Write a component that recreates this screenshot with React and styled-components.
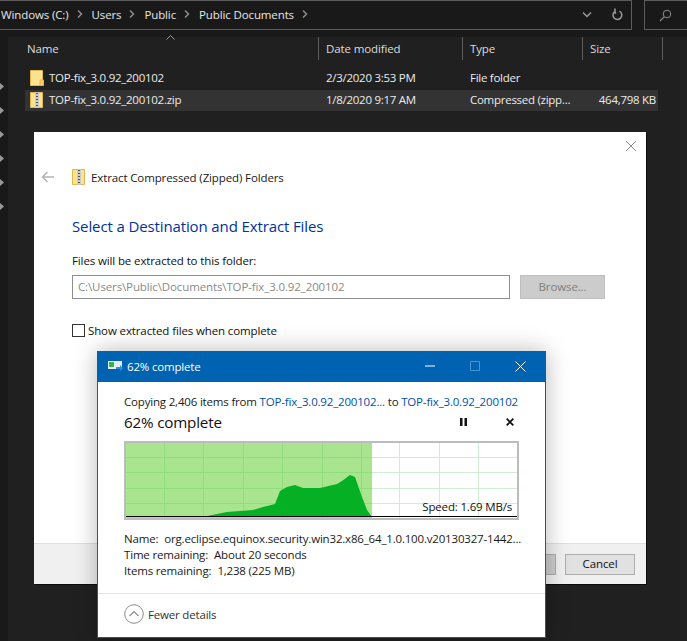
import React from 'react';
import styled, { createGlobalStyle } from 'styled-components';

const GlobalStyle = createGlobalStyle`
  html, body {
    margin: 0;
    padding: 0;
    background: #191919;
  }
  * {
    box-sizing: border-box;
  }
`;

const FONT = '"Open Sans", "Noto Sans", "Liberation Sans", sans-serif';

const Desktop = styled.div`
  position: relative;
  width: 687px;
  height: 641px;
  overflow: hidden;
  background: #191919;
  font-family: ${FONT};
  font-size: 11.5px;
  letter-spacing: -0.12px;
  color: #000;
`;

/* explorer behind the dialogs */
const TopBar = styled.div`
  display: flex;
  height: 37px;
  padding-bottom: 7px;
  background: #191919;
`;

const AddressBar = styled.div`
  flex: none;
  width: 632px;
  height: 30px;
  display: flex;
  align-items: center;
  border: 1px solid #5c5c5c;
  border-left: none;
  padding: 0 0 2px 1px;
  color: #e6e6e6;
`;

const Crumb = styled.span`
  white-space: nowrap;
`;

const CrumbArrow = styled.svg`
  width: 6px;
  height: 8px;
  margin: 0 9px 0 8px;
  flex: none;
`;

const AddressTools = styled.div`
  margin-left: auto;
  display: flex;
  align-items: center;
  gap: 20px;
  padding-right: 8px;
`;

const SearchBox = styled.div`
  flex: none;
  width: 60px;
  height: 30px;
  margin-left: 12px;
  display: flex;
  align-items: center;
  padding-left: 14px;
  border: 1px solid #5c5c5c;
  border-right: none;
`;

const Content = styled.div`
  display: flex;
  height: 604px;
`;

const NavPane = styled.div`
  width: 8px;
  display: flex;
  flex-direction: column;
  gap: 17px;
  padding-top: 46px;
  background: #191919;
`;

const NavArrow = styled.svg`
  width: 4px;
  height: 7px;
  display: block;
`;

const FileArea = styled.div`
  flex: 1;
  background: #202020;
`;

const HeaderRow = styled.div`
  display: grid;
  grid-template-columns: 311px 144px 120px 80px;
  height: 25px;
  padding-bottom: 2px;
  position: relative;
`;

const HeaderCell = styled.div`
  display: flex;
  align-items: center;
  padding-left: ${(p) => p.$pad || 7}px;
  border-right: 1px solid #5c5c5c;
  color: #dcdcdc;
`;

const SortCaret = styled.svg`
  position: absolute;
  left: 158px;
  top: -2px;
  width: 9px;
  height: 5px;
`;

const FileRow = styled.div`
  display: grid;
  grid-template-columns: 294px 144px 120px 73px;
  align-items: center;
  height: 21px;
  margin: ${(p) => (p.$selected ? '1px' : '6px')} 0 0 17px;
  width: 633px;
  padding-bottom: 2px;
  letter-spacing: -0.27px;
  background: ${(p) => (p.$selected ? '#333333' : 'transparent')};
  color: #ececec;
`;

const NameCell = styled.div`
  display: flex;
  align-items: center;
  gap: 5px;
  padding-left: 5px;
`;

const DataCell = styled.div`
  padding-left: 7px;
  white-space: nowrap;
  text-align: ${(p) => (p.$right ? 'right' : 'left')};
`;

/* white extract wizard */
const Wizard = styled.div`
  position: absolute;
  left: 34px;
  top: 132px;
  width: 612px;
  height: 452px;
  display: flex;
  flex-direction: column;
  background: #fff;
  box-shadow: 1px 1px 0 #0c0c0c;
`;

const WizardClose = styled.svg`
  position: absolute;
  right: 9px;
  top: 8px;
  width: 12px;
  height: 12px;
`;

const WizardBody = styled.div`
  flex: 1;
  padding: 36px 0 0 38px;
`;

const WizardTitleRow = styled.div`
  display: flex;
  align-items: center;
  height: 18px;
  margin-left: -31px;
`;

const BackArrow = styled.svg`
  width: 14px;
  height: 12px;
  margin-right: 17px;
`;

const WizardTitle = styled.span`
  margin-left: 5px;
  color: #1a1a1a;
`;

const Heading = styled.h1`
  margin: 30px 0 0;
  font-size: 15px;
  font-weight: 400;
  line-height: 20px;
  color: #003399;
`;

const FieldLabel = styled.div`
  margin-top: 17px;
  line-height: 16px;
  color: #111;
`;

const FieldRow = styled.div`
  display: flex;
  gap: 10px;
  margin-top: 6px;
`;

const PathInput = styled.div`
  width: 438px;
  height: 24px;
  border: 1px solid #8e8e8e;
  padding-left: 5px;
  line-height: 21px;
  color: #8a8a8a;
`;

const BrowseButton = styled.div`
  width: 85px;
  height: 24px;
  background: #cccccc;
  border: 1px solid #bfbfbf;
  text-align: center;
  line-height: 21px;
  color: #7f7f7f;
`;

const CheckRow = styled.div`
  display: flex;
  align-items: center;
  gap: 3px;
  margin-top: 24px;
  color: #111;
`;

const CheckBox = styled.span`
  width: 13px;
  height: 13px;
  border: 1px solid #333;
  background: #fff;
`;

const WizardFooter = styled.div`
  height: 41px;
  display: flex;
  justify-content: flex-end;
  align-items: flex-start;
  gap: 9px;
  padding: 10px 11px 0 0;
  background: #f0f0f0;
  border-top: 1px solid #dfdfdf;
`;

const FooterButton = styled.div`
  width: ${(p) => p.$w}px;
  height: 21px;
  background: ${(p) => (p.$muted ? '#cccccc' : '#e1e1e1')};
  border: 1px solid #adadad;
  text-align: center;
  line-height: 18px;
  color: #111;
`;

/* copy progress window */
const ProgressWindow = styled.div`
  position: absolute;
  left: 97px;
  top: 351px;
  width: 449px;
  height: 287px;
  display: flex;
  flex-direction: column;
  letter-spacing: -0.18px;
  background: #fff;
  border: 1px solid #0063b1;
  box-shadow: 0 0 22px rgba(0, 0, 0, 0.28);
`;

const TitleBar = styled.div`
  display: flex;
  align-items: center;
  height: 30px;
  padding: 0 0 2px 10px;
  background: #0063b1;
  color: #fff;
`;

const TitleText = styled.span`
  margin-left: 4px;
`;

const WindowControls = styled.div`
  margin-left: auto;
  display: flex;
  align-items: center;
  gap: 35px;
  padding-right: 19px;
`;

const ProgressBody = styled.div`
  flex: 1;
  padding: 4px 26px 0;
`;

const CopyLine = styled.div`
  line-height: 24px;
  height: 22px;
  margin-top: 4px;
  white-space: nowrap;
  color: #1a1a1a;
`;

const FileLink = styled.span`
  color: #0050a8;
`;

const PercentRow = styled.div`
  display: flex;
  align-items: center;
  justify-content: space-between;
  height: 21px;
  padding: 0 2px 2px 0;
`;

const PercentText = styled.span`
  font-size: 15.2px;
  color: #111;
`;

const RowActions = styled.div`
  display: flex;
  align-items: center;
  gap: 39px;
  padding-right: 3px;
`;

const Graph = styled.div`
  position: relative;
  width: 395px;
  height: 79px;
  margin-top: 8px;
  border: 2px solid #bcbcbc;
  background: #fff;
`;

const GraphSvg = styled.svg`
  display: block;
  width: 391px;
  height: 75px;
`;

const SpeedLabel = styled.span`
  position: absolute;
  right: 5px;
  bottom: 4px;
  padding-left: 3px;
  color: #111;
  line-height: 15px;
`;

const Details = styled.div`
  margin-top: 11px;
  line-height: 16px;
  color: #1a1a1a;
  white-space: nowrap;
`;

const DetailRow = styled.div`
  display: flex;
  gap: 6px;
`;

const ProgressFooter = styled.div`
  height: 44px;
  display: flex;
  align-items: center;
  gap: 4px;
  padding: 0 0 3px 26px;
  border-top: 1px solid #e3e3e3;
  color: #333;
`;

const Chevron = () => (
  <CrumbArrow viewBox="0 0 6 8">
    <path d="M1 .5 4.5 4 1 7.5" fill="none" stroke="#8c8c8c" strokeWidth="1.5" />
  </CrumbArrow>
);

const FolderIcon = () => (
  <svg width="14" height="16" viewBox="0 0 14 16">
    <path d="M.5.5h12v15H.5z" fill="#fbe38f" stroke="#e0b84f" />
    <path d="M10 10h3.5v5.5H10z" fill="#f5cf62" stroke="#e0b84f" />
  </svg>
);

const ZipIcon = () => (
  <svg width="14" height="16" viewBox="0 0 14 16">
    <path d="M.5.5h12v15H.5z" fill="#fbe38f" stroke="#e0b84f" />
    <path d="M5 0h4v16H5z" fill="#c9c9c9" />
    <path d="M6 1h2v1H6zm0 3h2v1H6zm0 3h2v1H6zm0 3h2v1H6zm0 3h2v1H6z" fill="#555" />
  </svg>
);

const graphLines = {
  vertical: [164, 203, 243, 282, 322, 361, 399, 439, 478],
  horizontal: [458, 473, 489, 504],
};

const speedShape =
  '173,518 207,517 227,513 253,511 263,508 275,505 280,492 287,488 295,486 303,489 320,489 337,485 342,482 350,476 355,478 362,498 367,511 372,518';

const SpeedGraph = () => (
  <GraphSvg viewBox="126 444 391 75">
    <rect x="126" y="444" width="246" height="75" fill="#a9e58e" />
    {graphLines.vertical.map((x) => (
      <line key={x} x1={x + 0.5} x2={x + 0.5} y1="444" y2="519" stroke={x < 372 ? '#90dd7c' : '#cdeed2'} />
    ))}
    {graphLines.horizontal.map((y) => (
      <React.Fragment key={y}>
        <line x1="126" x2="372" y1={y + 0.5} y2={y + 0.5} stroke="#90dd7c" />
        <line x1="372" x2="517" y1={y + 0.5} y2={y + 0.5} stroke="#cdeed2" />
      </React.Fragment>
    ))}
    <polygon points={speedShape} fill="#06b025" />
    <line x1="126" x2="517" y1="517.5" y2="517.5" stroke="#000" />
  </GraphSvg>
);

const App = () => (
  <Desktop>
    <GlobalStyle />
    <TopBar>
      <AddressBar>
        <Crumb>Windows (C:)</Crumb>
        <Chevron />
        <Crumb>Users</Crumb>
        <Chevron />
        <Crumb>Public</Crumb>
        <Chevron />
        <Crumb>Public Documents</Crumb>
        <Chevron />
        <AddressTools>
          <svg width="10" height="7" viewBox="0 0 10 7">
            <path d="M1 1.5 5 5.5 9 1.5" fill="none" stroke="#9a9a9a" strokeWidth="1.5" />
          </svg>
          <svg width="11" height="13" viewBox="0 0 11 13">
            <path d="M7.5 3.2A4.4 4.4 0 1 1 3 3.4" fill="none" stroke="#9a9a9a" strokeWidth="1.5" />
            <path d="M3 .5v4.5h1.2" fill="none" stroke="#9a9a9a" strokeWidth="1.5" />
          </svg>
        </AddressTools>
      </AddressBar>
      <SearchBox>
        <svg width="13" height="13" viewBox="0 0 13 13">
          <circle cx="8" cy="5" r="3.8" fill="none" stroke="#8c8c8c" />
          <path d="M5.2 7.8 1 12" fill="none" stroke="#8c8c8c" strokeWidth="1.2" />
        </svg>
      </SearchBox>
    </TopBar>
    <Content>
      <NavPane>
        {[0, 1, 2, 3, 4, 5].map((n) => (
          <NavArrow key={n} viewBox="0 0 4 7">
            <path d="M0 0 4 3.5 0 7z" fill="#9a9a9a" />
          </NavArrow>
        ))}
      </NavPane>
      <FileArea>
        <HeaderRow>
          <SortCaret viewBox="0 0 9 5">
            <path d="M.5 4.5 4.5.5l4 4" fill="none" stroke="#9a9a9a" />
          </SortCaret>
          <HeaderCell $pad={19}>Name</HeaderCell>
          <HeaderCell>Date modified</HeaderCell>
          <HeaderCell>Type</HeaderCell>
          <HeaderCell>Size</HeaderCell>
        </HeaderRow>
        <FileRow>
          <NameCell>
            <FolderIcon />
            TOP-fix_3.0.92_200102
          </NameCell>
          <DataCell>2/3/2020 3:53 PM</DataCell>
          <DataCell>File folder</DataCell>
          <DataCell />
        </FileRow>
        <FileRow $selected>
          <NameCell>
            <ZipIcon />
            TOP-fix_3.0.92_200102.zip
          </NameCell>
          <DataCell>1/8/2020 9:17 AM</DataCell>
          <DataCell>Compressed (zipp...</DataCell>
          <DataCell $right>464,798 KB</DataCell>
        </FileRow>
      </FileArea>
    </Content>

    <Wizard>
      <WizardClose viewBox="0 0 12 12">
        <path d="M1 1l10 10M11 1 1 11" stroke="#8c8c8c" strokeWidth="1" fill="none" />
      </WizardClose>
      <WizardBody>
        <WizardTitleRow>
          <BackArrow viewBox="0 0 14 12">
            <path d="M13 6H2M6.5 1 1.5 6l5 5" fill="none" stroke="#b5b5b5" strokeWidth="1.6" />
          </BackArrow>
          <ZipIcon />
          <WizardTitle>Extract Compressed (Zipped) Folders</WizardTitle>
        </WizardTitleRow>
        <Heading>Select a Destination and Extract Files</Heading>
        <FieldLabel>Files will be extracted to this folder:</FieldLabel>
        <FieldRow>
          <PathInput>C:\Users\Public\Documents\TOP-fix_3.0.92_200102</PathInput>
          <BrowseButton>Browse...</BrowseButton>
        </FieldRow>
        <CheckRow>
          <CheckBox />
          Show extracted files when complete
        </CheckRow>
      </WizardBody>
      <WizardFooter>
        <FooterButton $w={76} $muted />
        <FooterButton $w={70}>Cancel</FooterButton>
      </WizardFooter>
    </Wizard>

    <ProgressWindow>
      <TitleBar>
        <svg width="15" height="12" viewBox="0 0 15 12">
          <path d="M0 1h14v8H0z" fill="#e6edf3" />
          <path d="M1 2h5v5H1z" fill="#37b34a" />
          <path d="M8 7h4V5l3 3-3 3V9H8z" fill="#2f8fe0" />
        </svg>
        <TitleText>62% complete</TitleText>
        <WindowControls>
          <svg width="10" height="2" viewBox="0 0 10 2">
            <path d="M0 1h10" stroke="#fff" />
          </svg>
          <svg width="10" height="10" viewBox="0 0 10 10">
            <path d="M.5.5h9v9h-9z" fill="none" stroke="#4b93d1" />
          </svg>
          <svg width="11" height="11" viewBox="0 0 11 11">
            <path d="M.5.5l10 10M10.5.5l-10 10" stroke="#fff" fill="none" />
          </svg>
        </WindowControls>
      </TitleBar>
      <ProgressBody>
        <CopyLine>
          Copying 2,406 items from <FileLink>TOP-fix_3.0.92_200102...</FileLink> to{' '}
          <FileLink>TOP-fix_3.0.92_200102</FileLink>
        </CopyLine>
        <PercentRow>
          <PercentText>62% complete</PercentText>
          <RowActions>
            <svg width="7" height="8" viewBox="0 0 7 8">
              <path d="M0 0h2.5v8H0zM4.5 0H7v8H4.5z" fill="#111" />
            </svg>
            <svg width="8" height="8" viewBox="0 0 8 8">
              <path d="M.7.7l6.6 6.6M7.3.7.7 7.3" stroke="#111" strokeWidth="1.8" fill="none" />
            </svg>
          </RowActions>
        </PercentRow>
        <Graph>
          <SpeedGraph />
          <SpeedLabel>Speed: 1.69 MB/s</SpeedLabel>
        </Graph>
        <Details>
          <DetailRow>
            <span>Name:</span>
            <span>org.eclipse.equinox.security.win32.x86_64_1.0.100.v20130327-1442...</span>
          </DetailRow>
          <DetailRow>
            <span>Time remaining:</span>
            <span>About 20 seconds</span>
          </DetailRow>
          <DetailRow>
            <span>Items remaining:</span>
            <span>1,238 (225 MB)</span>
          </DetailRow>
        </Details>
      </ProgressBody>
      <ProgressFooter>
        <svg width="20" height="20" viewBox="0 0 20 20">
          <circle cx="10" cy="10" r="9.3" fill="#fff" stroke="#8c8c8c" />
          <path d="M5.5 12 10 7.5l4.5 4.5" fill="none" stroke="#8c8c8c" strokeWidth="1.2" />
        </svg>
        Fewer details
      </ProgressFooter>
    </ProgressWindow>
  </Desktop>
);

export default App;
